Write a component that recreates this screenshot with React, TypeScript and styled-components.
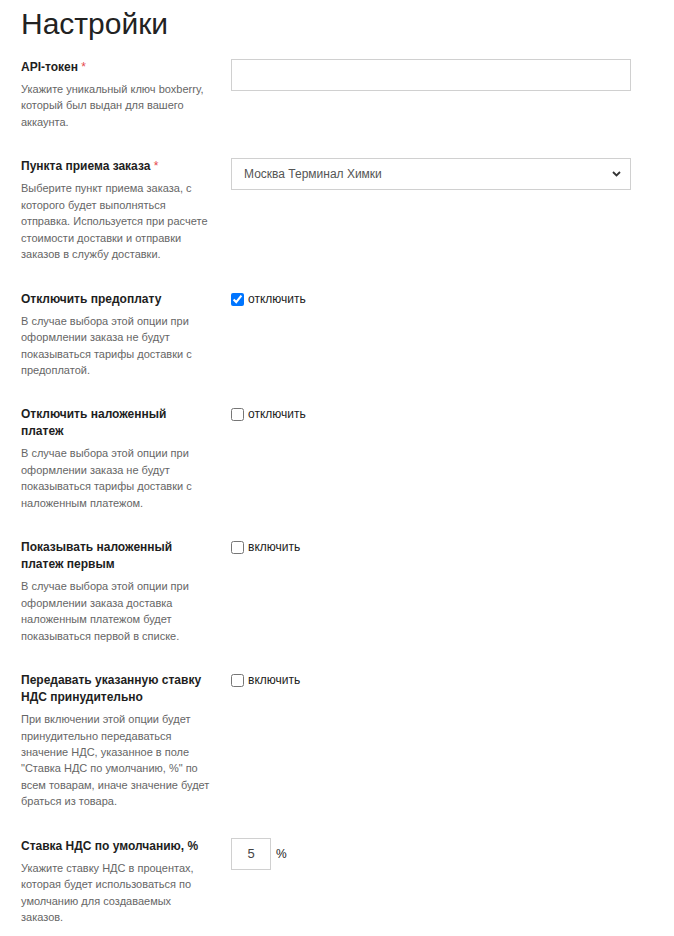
import React, { useState } from "react";
import styled, { createGlobalStyle } from "styled-components";

const GlobalStyle = createGlobalStyle`
  body {
    margin: 0;
    background: #fff;
    font-family: "Liberation Sans", Arial, sans-serif;
    color: #222;
  }
`;

const Page = styled.div`
  padding: 6px 21px 20px;
`;

const Title = styled.h1`
  margin: 0 0 17px;
  font-size: 30px;
  line-height: 36px;
  font-weight: 400;
  color: #222;
`;

const Row = styled.div`
  display: flex;
  gap: 20px;
  margin-bottom: 28px;
`;

const LabelCol = styled.div`
  width: 190px;
  flex-shrink: 0;
`;

const FieldLabel = styled.div`
  font-size: 12px;
  line-height: 17px;
  font-weight: 700;
  color: #1e1e1e;
`;

const Required = styled.span`
  color: #e5484d;
  font-weight: 400;
`;

const Hint = styled.p`
  margin: 5px 0 0;
  font-size: 11px;
  line-height: 16.45px;
  color: #666;
`;

const Control = styled.div`
  flex: 1;
  display: flex;
  align-items: flex-start;
`;

const TextInput = styled.input`
  box-sizing: border-box;
  width: 400px;
  height: 32px;
  border: 1px solid #d0d0d0;
  padding: 0 12px;
  font: 12px "Liberation Sans", Arial, sans-serif;
  outline: none;
`;

const SelectWrap = styled.div`
  position: relative;
  width: 400px;
`;

const Select = styled.select`
  box-sizing: border-box;
  width: 100%;
  height: 32px;
  appearance: none;
  border: 1px solid #d0d0d0;
  border-radius: 0;
  background: #fff;
  padding: 0 30px 0 12px;
  font: 12px "Liberation Sans", Arial, sans-serif;
  color: #555;
  outline: none;
`;

const Chevron = styled.svg`
  position: absolute;
  right: 10px;
  top: 13px;
  pointer-events: none;
`;

const CheckLabel = styled.label`
  display: flex;
  align-items: center;
  gap: 4px;
  font-size: 12px;
  line-height: 17px;
  color: #222;
`;

const Checkbox = styled.input`
  margin: 0;
  width: 13px;
  height: 13px;
`;

const NumberInput = styled.input`
  box-sizing: border-box;
  width: 40px;
  height: 32px;
  border: 1px solid #d0d0d0;
  text-align: center;
  font: 13px "Liberation Sans", Arial, sans-serif;
  color: #444;
  outline: none;
  padding: 0;
`;

const Unit = styled.span`
  margin-left: 5px;
  font-size: 12px;
  line-height: 32px;
  color: #222;
`;

type SettingRowProps = {
  label: string;
  required?: boolean;
  hint: string;
  children: React.ReactNode;
};

const SettingRow = ({ label, required, hint, children }: SettingRowProps) => (
  <Row>
    <LabelCol>
      <FieldLabel>
        {label}
        {required && <Required> *</Required>}
      </FieldLabel>
      <Hint>{hint}</Hint>
    </LabelCol>
    <Control>{children}</Control>
  </Row>
);

const Toggle = ({ text, initial }: { text: string; initial: boolean }) => {
  const [checked, setChecked] = useState(initial);
  return (
    <CheckLabel>
      <Checkbox
        type="checkbox"
        checked={checked}
        onChange={() => setChecked(!checked)}
      />
      {text}
    </CheckLabel>
  );
};

export default function App() {
  const [vat, setVat] = useState("5");
  return (
    <Page>
      <GlobalStyle />
      <Title>Настройки</Title>

      <SettingRow
        label="API-токен"
        required
        hint="Укажите уникальный ключ boxberry, который был выдан для вашего аккаунта."
      >
        <TextInput type="text" />
      </SettingRow>

      <SettingRow
        label="Пункта приема заказа"
        required
        hint="Выберите пункт приема заказа, с которого будет выполняться отправка. Используется при расчете стоимости доставки и отправки заказов в службу доставки."
      >
        <SelectWrap>
          <Select defaultValue="himki">
            <option value="himki">Москва Терминал Химки</option>
          </Select>
          <Chevron width="9" height="6" viewBox="0 0 9 6">
            <path
              d="M1 1l3.5 3.5L8 1"
              fill="none"
              stroke="#333"
              strokeWidth="1.8"
            />
          </Chevron>
        </SelectWrap>
      </SettingRow>

      <SettingRow
        label="Отключить предоплату"
        hint="В случае выбора этой опции при оформлении заказа не будут показываться тарифы доставки с предоплатой."
      >
        <Toggle text="отключить" initial={true} />
      </SettingRow>

      <SettingRow
        label="Отключить наложенный платеж"
        hint="В случае выбора этой опции при оформлении заказа не будут показываться тарифы доставки с наложенным платежом."
      >
        <Toggle text="отключить" initial={false} />
      </SettingRow>

      <SettingRow
        label="Показывать наложенный платеж первым"
        hint="В случае выбора этой опции при оформлении заказа доставка наложенным платежом будет показываться первой в списке."
      >
        <Toggle text="включить" initial={false} />
      </SettingRow>

      <SettingRow
        label="Передавать указанную ставку НДС принудительно"
        hint={'При включении этой опции будет принудительно передаваться значение НДС, указанное в поле "Ставка НДС по умолчанию, %" по всем товарам, иначе значение будет браться из товара.'}
      >
        <Toggle text="включить" initial={false} />
      </SettingRow>

      <SettingRow
        label="Ставка НДС по умолчанию, %"
        hint="Укажите ставку НДС в процентах, которая будет использоваться по умолчанию для создаваемых заказов."
      >
        <NumberInput
          type="text"
          value={vat}
          onChange={(e) => setVat(e.target.value)}
        />
        <Unit>%</Unit>
      </SettingRow>
    </Page>
  );
}
